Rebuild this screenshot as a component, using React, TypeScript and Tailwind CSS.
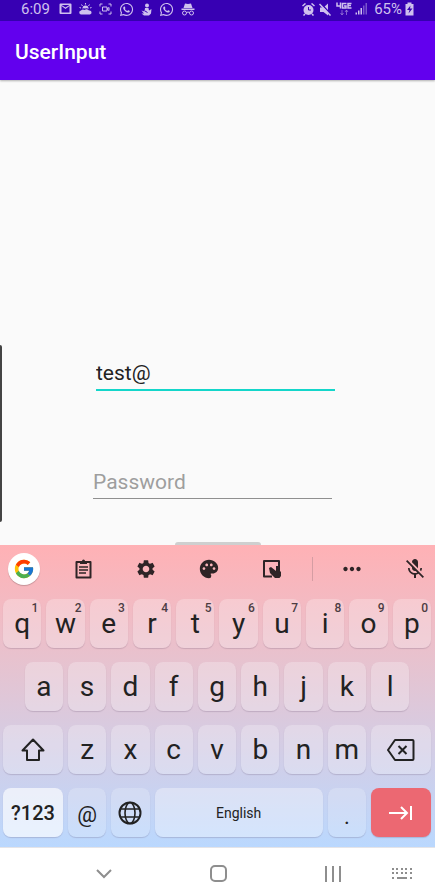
import type { ReactNode } from "react";
import { FaWhatsapp } from "react-icons/fa";
import { FcGoogle } from "react-icons/fc";
import { MdSettings, MdPalette, MdMoreHoriz, MdMicOff } from "react-icons/md";

const topRow = ["q", "w", "e", "r", "t", "y", "u", "i", "o", "p"];
const homeRow = ["a", "s", "d", "f", "g", "h", "j", "k", "l"];
const bottomRow = ["z", "x", "c", "v", "b", "n", "m"];

const GmailIcon = () => (
  <svg className="h-3 w-[13px]" viewBox="0 0 26 24" fill="currentColor">
    <path
      fillRule="evenodd"
      d="M3 1h20a2 2 0 0 1 2 2v17a2 2 0 0 1-2 2H3a2 2 0 0 1-2-2V3a2 2 0 0 1 2-2Zm2 18h16V6l-8 6-8-6Zm0-15 8 5 8-5Z"
    />
  </svg>
);

const WeatherIcon = () => (
  <svg className="h-3 w-[13px]" viewBox="0 0 26 24" fill="currentColor">
    <path d="M5 23a4 4 0 0 1-1-8 6 6 0 0 1 7 -1 6 6 0 0 1 9 1 4 4 0 0 1 2 8Z" />
    <path d="M7 11a6 6 0 0 1 12 0l1 1a8 8 0 0 0-8-1 6 6 0 0 0-6 1Z" />
    <path d="M13 0v3M5 3l2 3M21 3l-2 3M1 9l3 1M25 9l-3 1" stroke="currentColor" strokeWidth="2" />
  </svg>
);

const CaptureIcon = () => (
  <svg className="h-3 w-[13px]" viewBox="0 0 26 24" fill="none" stroke="currentColor" strokeWidth="2">
    <path d="M2 7V2h5M19 2h5v5M24 17v5h-5M7 22H2v-5" />
    <path d="M7 8h9v8H7ZM16 12l4-3v6l-4-3" />
  </svg>
);

const FigureIcon = () => (
  <svg className="h-[13px] w-[11px]" viewBox="0 0 22 26" fill="currentColor">
    <circle cx="12" cy="5" r="4" />
    <path d="M8 10h7l1 5 5-3-1 9-4 4H6l-5-4 5 0-5-6 6 2Z" />
    <path d="M8 16l5 3" stroke="#3700b3" strokeWidth="2" />
  </svg>
);

const IncognitoIcon = () => (
  <svg className="h-[13px] w-[14px]" viewBox="0 0 28 26" fill="currentColor">
    <path d="M8 1l6 1 6-1 3 9H5ZM1 11h26v3H1Z" />
    <g fill="none" stroke="currentColor" strokeWidth="2">
      <circle cx="7" cy="20" r="4" />
      <circle cx="21" cy="20" r="4" />
      <path d="M11 19q3-2 6 0" />
    </g>
  </svg>
);

const AlarmIcon = () => (
  <svg className="h-[13px] w-[13px]" viewBox="0 0 26 26">
    <path d="M1 6l6-5M25 6l-6-5M6 22l-3 3M20 22l3 3" stroke="currentColor" strokeWidth="3" />
    <circle cx="13" cy="14" r="10" fill="currentColor" />
    <path d="M13 8v6h5" fill="none" stroke="#3700b3" strokeWidth="2" />
  </svg>
);

const MuteIcon = () => (
  <svg className="h-[13px] w-[15px]" viewBox="0 0 30 26">
    <path d="M4 9h7l9-8v24l-9-7H4Z" fill="currentColor" />
    <path d="M5 0l22 24" stroke="#3700b3" strokeWidth="3" />
    <path d="M3 2l22 23" stroke="currentColor" strokeWidth="3" />
  </svg>
);

const NetworkIcon = () => (
  <svg className="h-[14px] w-4" viewBox="0 0 32 28" fill="none" stroke="currentColor" strokeWidth="3">
    <path d="M2 1v7h8M9 1v12M21 3h-8v9h7V8h-4M31 3h-7v9h7M24 7h6" />
    <path d="M12 16v9M9 22l3 4 3-4M21 26v-9M18 20l3-4 3 4" strokeWidth="2" opacity="0.5" />
  </svg>
);

const SignalIcon = () => (
  <svg className="h-3 w-3" viewBox="0 0 24 24" fill="currentColor">
    <path d="M1 19h3v4H1ZM6 15h3v8H6ZM11 10h3v13h-3Z" />
    <path d="M16 5h3v18h-3ZM21 0h3v23h-3Z" opacity="0.45" />
  </svg>
);

const BatteryIcon = () => (
  <svg className="h-[14px] w-[9px]" viewBox="0 0 18 28">
    <path d="M5 1h8v3h4v23H1V4h4Z" fill="currentColor" />
    <path d="M11 7l-7 9h5l-2 7 8-10h-5Z" fill="#3700b3" />
  </svg>
);

const ClipboardIcon = () => (
  <svg className="h-5 w-[17px]" viewBox="0 0 17 20" fill="none" stroke="currentColor" strokeWidth="2">
    <path d="M1.500 3h14v15.500h-14Z" strokeLinejoin="round" />
    <path d="M4 8h9M4 11h9M4 14h7" strokeWidth="1.400" />
    <path d="M5 2h2a1.500 1.500 0 0 1 3 0h2v3H5Z" fill="currentColor" stroke="none" />
  </svg>
);

const TouchPanelIcon = () => (
  <svg className="h-5 w-5" viewBox="0 0 20 20">
    <path d="M10 17.500H2V2h15v9" fill="none" stroke="currentColor" strokeWidth="2" strokeLinejoin="round" />
    <path d="M7 9l2-1 5 4V7l4 0v5l1 1v4l-1.500 2h-4.500l-5-5Z" fill="currentColor" />
  </svg>
);

const ShiftIcon = () => (
  <svg className="h-6 w-6" viewBox="0 0 24 24" fill="none" stroke="currentColor" strokeWidth="2" strokeLinejoin="round">
    <path d="M12 1.500L1.500 12.500H6V22h12v-9.500h4.500Z" />
  </svg>
);

const BackspaceIcon = () => (
  <svg className="h-[22px] w-7" viewBox="0 0 28 22" fill="none" stroke="currentColor" strokeWidth="2" strokeLinejoin="round">
    <path d="M8 1h17.500a1 1 0 0 1 1 1v18a1 1 0 0 1-1 1H8L1 11Z" />
    <path d="M11.500 7l8 8M19.500 7l-8 8" />
  </svg>
);

const GlobeIcon = () => (
  <svg className="h-6 w-6" viewBox="0 0 24 24" fill="none" stroke="currentColor" strokeWidth="2">
    <circle cx="12" cy="12" r="10.500" />
    <ellipse cx="12" cy="12" rx="5" ry="10.500" strokeWidth="1.600" />
    <path d="M2 8h20M2 16h20" strokeWidth="1.600" />
  </svg>
);

const NextFieldIcon = () => (
  <svg className="h-4 w-6" viewBox="0 0 24 16" fill="none" stroke="currentColor" strokeWidth="2">
    <path d="M0 8h18M12 2l6 6-6 6M22 1v14" />
  </svg>
);

const KeyboardIcon = () => (
  <svg className="h-3 w-5" viewBox="0 0 20 12" fill="currentColor">
    {[0, 4, 9, 13, 18].map((x) => (
      <g key={x}>
        <rect x={x} y="0" width="2" height="2" />
        <rect x={x} y="4" width="2" height="2" />
      </g>
    ))}
    <path d="M0 9h2v2H0ZM5 9h10v2H5ZM18 9h2v2h-2Z" />
  </svg>
);

function Key({
  label,
  hint,
  className = "col-span-2 bg-white/25 text-[28px]",
  children,
}: {
  label: string;
  hint?: string;
  className?: string;
  children?: ReactNode;
}) {
  return (
    <button
      type="button"
      aria-label={label}
      className={`relative flex h-[49px] items-center justify-center rounded-lg leading-8 shadow-[0_1px_1px_rgba(80,60,90,0.2)] ${className}`}
    >
      {children ?? label}
      {hint && (
        <span className="absolute top-[2px] right-[3px] text-xs leading-[14px] font-medium text-[#4b3c42]">{hint}</span>
      )}
    </button>
  );
}

function ToolButton({ label, children }: { label: string; children: ReactNode }) {
  return (
    <button type="button" aria-label={label} className="flex h-8 w-8 items-center justify-center text-[#2e2426]">
      {children}
    </button>
  );
}

export default function App() {
  return (
    <div className="flex min-h-screen flex-col bg-[#fafafa] font-[Roboto,sans-serif] text-[#222222]">
      <div className="flex h-[21px] items-center justify-between bg-[#3700b3] px-[21px] pb-[3px] text-[#cfc0ee]">
        <div className="flex items-center gap-[7px]">
          <span className="w-[31px] text-[15px] leading-[18px]">6:09</span>
          <GmailIcon />
          <WeatherIcon />
          <CaptureIcon />
          <FaWhatsapp className="h-[15px] w-[15px]" />
          <FigureIcon />
          <FaWhatsapp className="h-[15px] w-[15px]" />
          <IncognitoIcon />
        </div>
        <div className="flex items-center gap-[3px]">
          <AlarmIcon />
          <MuteIcon />
          <NetworkIcon />
          <SignalIcon />
          <span className="ml-1 text-[15px] leading-[18px]">65%</span>
          <BatteryIcon />
        </div>
      </div>

      <header className="z-10 flex h-[59px] items-center bg-[#6200ee] px-[15px] pt-[2px] shadow-[0_1px_2px_rgba(0,0,0,0.3)]">
        <h1 className="text-[21px] leading-6 font-medium text-white">UserInput</h1>
      </header>

      <main className="relative flex flex-1 flex-col">
        <div className="absolute top-[265px] left-0 h-[177px] w-[2px] rounded-r-sm bg-[#444444]" />
        <form className="flex flex-col gap-[72px] pt-[275px]">
          <div className="pr-[100px] pl-24">
            <input
              type="text"
              aria-label="Email"
              defaultValue="test@"
              className="block h-9 w-full border-b-2 border-[#14d6ca] pt-[2px] text-[21px] leading-7 outline-none"
            />
          </div>
          <div className="pr-[103px] pl-[93px]">
            <input
              type="password"
              aria-label="Password"
              placeholder="Password"
              className="block h-9 w-full border-b border-[#8f8f8f] pt-[2px] text-[21px] leading-7 outline-none placeholder:text-[#9e9e9e]"
            />
          </div>
        </form>
        <div className="mx-auto mt-auto h-[3px] w-[86px] rounded-t-sm bg-[#cfcfcf]" />
      </main>

      <section
        aria-label="Keyboard"
        className="bg-linear-to-b from-[#ffb1b5] via-[#e6c3d0] via-40% to-[#bad8fe] pr-1 pb-[10px] pl-[3px]"
      >
        <div className="flex h-[54px] items-start justify-between pt-2 pl-[5px]">
          <div className="flex gap-[31px]">
            <button
              type="button"
              aria-label="Google"
              className="-mr-1 flex h-8 w-8 items-center justify-center rounded-full bg-white shadow-[0_1px_1px_rgba(0,0,0,0.2)]"
            >
              <FcGoogle className="h-[22px] w-[22px]" />
            </button>
            <ToolButton label="Clipboard">
              <ClipboardIcon />
            </ToolButton>
            <ToolButton label="Settings">
              <MdSettings className="h-[22px] w-[22px]" />
            </ToolButton>
            <ToolButton label="Themes">
              <MdPalette className="h-[22px] w-[22px]" />
            </ToolButton>
            <ToolButton label="One-handed mode">
              <TouchPanelIcon />
            </ToolButton>
          </div>
          <div className="flex items-center gap-[31px]">
            <div className="-mr-2 h-6 w-px bg-[#d59da3]" />
            <ToolButton label="More">
              <MdMoreHoriz className="h-[26px] w-[26px]" />
            </ToolButton>
            <ToolButton label="Voice typing off">
              <MdMicOff className="h-6 w-6" />
            </ToolButton>
          </div>
        </div>

        <div className="grid grid-cols-20 gap-x-[5px] gap-y-[14px]">
          {topRow.map((letter, i) => (
            <Key key={letter} label={letter} hint={String((i + 1) % 10)} />
          ))}

          <div />
          {homeRow.map((letter) => (
            <Key key={letter} label={letter} />
          ))}
          <div />

          <Key label="Shift" className="col-span-3 bg-white/25">
            <ShiftIcon />
          </Key>
          {bottomRow.map((letter) => (
            <Key key={letter} label={letter} />
          ))}
          <Key label="Backspace" className="col-span-3 bg-white/25">
            <BackspaceIcon />
          </Key>

          <Key label="?123" className="col-span-3 bg-white/65 text-xl font-medium" />
          <Key label="@" className="col-span-2 bg-white/20 pt-1 text-[22px]" />
          <Key label="Language" className="col-span-2 bg-white/20">
            <GlobeIcon />
          </Key>
          <Key label="English" className="col-span-8 bg-white/35 text-sm" />
          <Key label="." className="col-span-2 bg-white/20 pt-2 text-[22px]" />
          <Key label="Next field" className="col-span-3 bg-[#ec6872] text-white">
            <NextFieldIcon />
          </Key>
        </div>
      </section>

      <nav className="flex h-12 items-center border-t border-[#e4e4e8] bg-white pt-1 pr-[17px] pl-22 text-[#8e8e8e]">
        <div className="mr-[37px] flex flex-1 justify-between">
          <button type="button" aria-label="Hide keyboard" className="flex h-8 w-8 items-center justify-center">
            <svg className="h-[10px] w-4" viewBox="0 0 16 10" fill="none" stroke="currentColor" strokeWidth="2">
              <path d="M1 1l7 7 7-7" />
            </svg>
          </button>
          <button type="button" aria-label="Home" className="flex h-8 w-8 items-center justify-center">
            <span className="h-[17px] w-[17px] rounded-[5px] border-2 border-current" />
          </button>
          <button type="button" aria-label="Recent apps" className="flex h-8 w-8 items-center justify-center gap-[5px]">
            <span className="h-4 w-[2px] bg-current" />
            <span className="h-4 w-[2px] bg-current" />
            <span className="h-4 w-[2px] bg-current" />
          </button>
        </div>
        <button type="button" aria-label="Choose keyboard" className="flex h-8 w-8 items-center justify-center">
          <KeyboardIcon />
        </button>
      </nav>
    </div>
  );
}
